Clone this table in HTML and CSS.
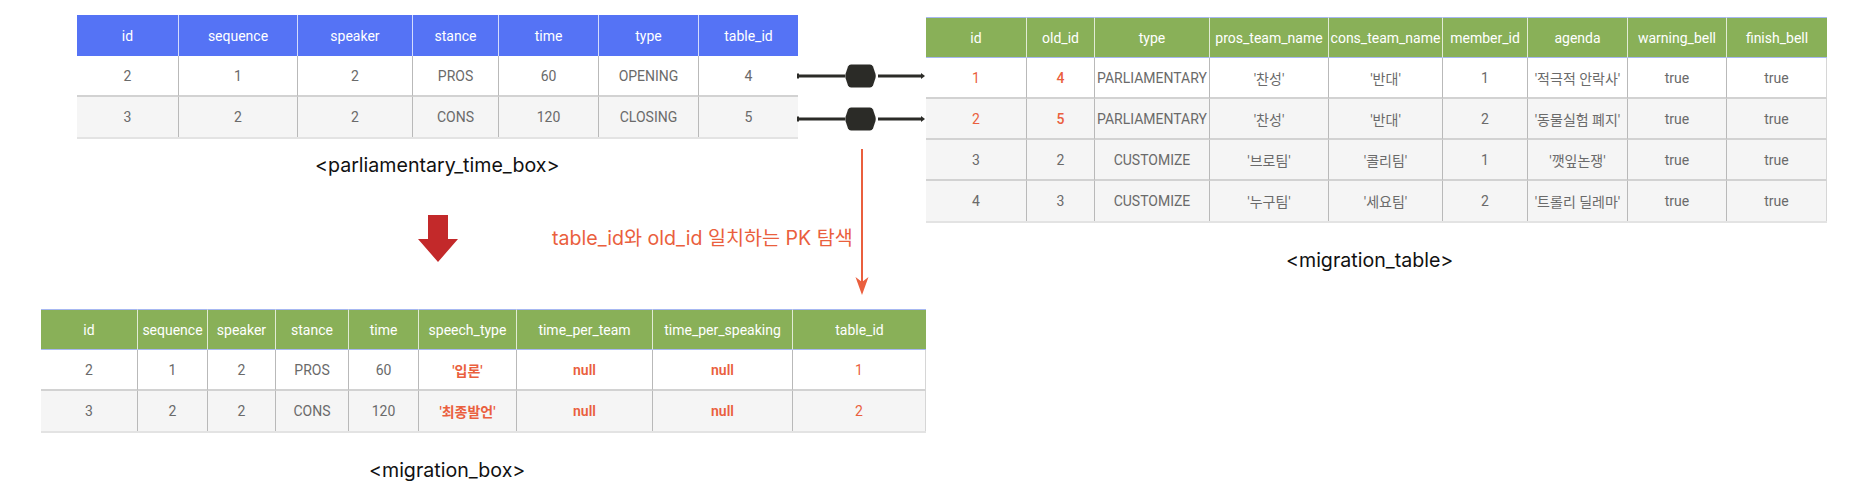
FILE: index.html
```html
<!DOCTYPE html>
<html lang="ko">
<head>
<meta charset="utf-8">
<title>migration diagram</title>
<link rel="stylesheet" href="styles.css">
</head>
<body>
<main class="canvas">

  <section class="node node-ptb">
    <div class="grid grid-ptb">
      <div class="th">id</div><div class="th">sequence</div><div class="th">speaker</div><div class="th">stance</div><div class="th">time</div><div class="th">type</div><div class="th">table_id</div>
      <div class="td first">2</div><div class="td">1</div><div class="td">2</div><div class="td">PROS</div><div class="td">60</div><div class="td">OPENING</div><div class="td">4</div>
      <div class="td alt first last-row">3</div><div class="td alt last-row">2</div><div class="td alt last-row">2</div><div class="td alt last-row">CONS</div><div class="td alt last-row">120</div><div class="td alt last-row">CLOSING</div><div class="td alt last-row">5</div>
    </div>
  </section>
  <p class="caption cap-ptb">&lt;parliamentary_time_box&gt;</p>

  <svg class="connector" width="130" height="70" viewBox="0 0 130 70">
    <g fill="#2b2b27" stroke="#2b2b27">
      <line x1="1" y1="12" x2="48" y2="12" stroke-width="3"/>
      <line x1="81" y1="12" x2="125" y2="12" stroke-width="3"/>
      <rect x="0" y="9.5" width="2" height="5" stroke="none"/>
      <path d="M124 9 L128 12 L124 15 Z" stroke="none"/>
      <path d="M54 0.5 L73 0.5 Q75 0.5 76 2.5 L78.5 10 Q79 12 78.5 14 L76 21.5 Q75 23.5 73 23.5 L54 23.5 Q52 23.5 51 21.5 L48.5 14 Q48 12 48.5 10 L51 2.5 Q52 0.5 54 0.5 Z" stroke="none"/>

      <line x1="1" y1="55" x2="48" y2="55" stroke-width="3"/>
      <line x1="81" y1="55" x2="125" y2="55" stroke-width="3"/>
      <rect x="0" y="52.5" width="2" height="5" stroke="none"/>
      <path d="M124 52 L128 55 L124 58 Z" stroke="none"/>
      <path d="M54 43.5 L73 43.5 Q75 43.5 76 45.5 L78.5 53 Q79 55 78.5 57 L76 64.5 Q75 66.5 73 66.5 L54 66.5 Q52 66.5 51 64.5 L48.5 57 Q48 55 48.5 53 L51 45.5 Q52 43.5 54 43.5 Z" stroke="none"/>
    </g>
  </svg>

  <section class="node node-mt">
    <div class="grid grid-mt">
      <div class="th">id</div><div class="th">old_id</div><div class="th">type</div><div class="th">pros_team_name</div><div class="th">cons_team_name</div><div class="th">member_id</div><div class="th">agenda</div><div class="th">warning_bell</div><div class="th">finish_bell</div>
      <div class="td first red">1</div><div class="td red medium">4</div><div class="td">PARLIAMENTARY</div><div class="td">'찬성'</div><div class="td">'반대'</div><div class="td">1</div><div class="td">'적극적 안락사'</div><div class="td">true</div><div class="td end">true</div>
      <div class="td alt first red">2</div><div class="td alt red medium">5</div><div class="td alt">PARLIAMENTARY</div><div class="td alt">'찬성'</div><div class="td alt">'반대'</div><div class="td alt">2</div><div class="td alt">'동물실험 폐지'</div><div class="td alt">true</div><div class="td alt end">true</div>
      <div class="td alt first">3</div><div class="td alt">2</div><div class="td alt">CUSTOMIZE</div><div class="td alt">'브로팀'</div><div class="td alt">'콜리팀'</div><div class="td alt">1</div><div class="td alt">'깻잎논쟁'</div><div class="td alt">true</div><div class="td alt end">true</div>
      <div class="td alt first last-row">4</div><div class="td alt last-row">3</div><div class="td alt last-row">CUSTOMIZE</div><div class="td alt last-row">'누구팀'</div><div class="td alt last-row">'세요팀'</div><div class="td alt last-row">2</div><div class="td alt last-row">'트롤리 딜레마'</div><div class="td alt last-row">true</div><div class="td alt end last-row">true</div>
    </div>
  </section>
  <p class="caption cap-mt">&lt;migration_table&gt;</p>

  <svg class="block-arrow" width="40" height="47" viewBox="0 0 40 47">
    <path d="M10 0 H30 V24 H40 L20 47 L0 24 H10 Z" fill="#c3292a"/>
  </svg>

  <p class="note">table_id와 old_id 일치하는 PK 탐색</p>
  <svg class="red-arrow" width="16" height="148" viewBox="0 0 16 148">
    <line x1="8" y1="0" x2="8" y2="134" stroke="#ea5f3e" stroke-width="2"/>
    <path d="M1.5 128 L8 133 L14.5 128 L8 146 Z" fill="#ea5f3e"/>
  </svg>

  <section class="node node-mb">
    <div class="grid grid-mb">
      <div class="th">id</div><div class="th">sequence</div><div class="th">speaker</div><div class="th">stance</div><div class="th">time</div><div class="th">speech_type</div><div class="th">time_per_team</div><div class="th">time_per_speaking</div><div class="th">table_id</div>
      <div class="td first">2</div><div class="td">1</div><div class="td">2</div><div class="td">PROS</div><div class="td">60</div><div class="td red strong">'입론'</div><div class="td red strong">null</div><div class="td red strong">null</div><div class="td red end">1</div>
      <div class="td alt first last-row">3</div><div class="td alt last-row">2</div><div class="td alt last-row">2</div><div class="td alt last-row">CONS</div><div class="td alt last-row">120</div><div class="td alt red strong last-row">'최종발언'</div><div class="td alt red strong last-row">null</div><div class="td alt red strong last-row">null</div><div class="td alt red end last-row">2</div>
    </div>
  </section>
  <p class="caption cap-mb">&lt;migration_box&gt;</p>

</main>
</body>
</html>
```

FILE: styles.css
```css
html, body {
  margin: 0;
  padding: 0;
  background: #ffffff;
}

.canvas {
  position: relative;
  width: 1850px;
  height: 500px;
  overflow: hidden;
  font-family: Roboto, "Noto Sans CJK KR", sans-serif;
}

.node {
  position: absolute;
}

.node-ptb { left: 77px; top: 15px; }
.node-mt { left: 926px; top: 17px; }
.node-mb { left: 41px; top: 309px; }

.grid {
  display: grid;
  border-bottom: 2px solid #e3e3e3;
}

.grid-ptb {
  grid-template-columns: 101px 119px 115px 86px 100px 100px 100px;
  grid-template-rows: 41px 41px 40px;
}
.grid-mt {
  grid-template-columns: 100px 68px 115px 119px 114px 85px 100px 99px 101px;
  grid-template-rows: 41px 41px 41px 41px 40px;
}
.grid-mb {
  grid-template-columns: 96px 70px 68px 73px 70px 98px 136px 140px 134px;
  grid-template-rows: 41px 41px 40px;
}

.th, .td {
  box-sizing: border-box;
  display: flex;
  align-items: center;
  justify-content: center;
  font-size: 14px;
  white-space: nowrap;
}

.th {
  color: #ffffff;
  border-left: 1px solid rgba(255, 255, 255, 0.75);
}

.th:first-child { border-left: none; }

.grid-ptb .th { background: #5573f5; }
.grid-mt .th, .grid-mb .th {
  background: #89b058;
  border-top: 1px solid #a7b8f1;
  border-bottom: 1px solid #a7b8f1;
}

.td {
  color: #6a6a6a;
  background: #ffffff;
  border-left: 1px solid #b9b9b9;
  border-bottom: 2px solid #d2d2d2;
}

.td.first { border-left: none; }
.td.end { border-right: 1px solid #d6d6d6; }
.td.last-row { border-bottom: none; }
.td.alt { background: #f5f5f5; }

.td.red { color: #ea5f3e; }
.td.medium { font-weight: 500; }
.td.strong { font-weight: 600; }

.caption {
  position: absolute;
  margin: 0;
  font-family: Inter, "Noto Sans", sans-serif;
  font-size: 19.6px;
  color: #111111;
  line-height: 24px;
  white-space: nowrap;
}

.cap-ptb { left: 315px; top: 153px; }
.cap-mt { left: 1286px; top: 248px; }
.cap-mb { left: 369px; top: 458px; }

.connector {
  position: absolute;
  left: 797px;
  top: 64px;
}

.block-arrow {
  position: absolute;
  left: 418px;
  top: 215px;
}

.note {
  position: absolute;
  margin: 0;
  left: 552px;
  top: 226px;
  font-family: Inter, "Noto Sans CJK KR", sans-serif;
  font-size: 19.6px;
  line-height: 24px;
  color: #ea5f3e;
  white-space: nowrap;
}

.red-arrow {
  position: absolute;
  left: 854px;
  top: 149px;
}
```
